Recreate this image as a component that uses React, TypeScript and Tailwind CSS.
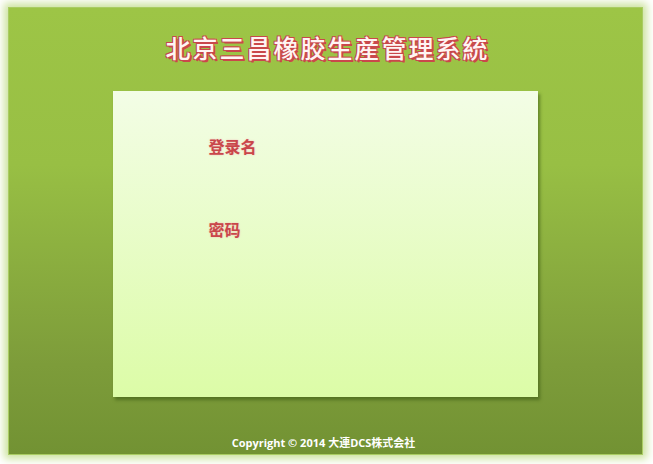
import React from 'react';

const cjk = '"Noto Sans CJK SC", "Noto Sans CJK JP", sans-serif';

const App: React.FC = () => {
  return (
    <div className="w-[653px] h-[464px] bg-white p-[7px_10px_9px_8px]">
      <div
        className="w-full h-full flex flex-col items-center border border-[#a9cc62] bg-[linear-gradient(to_bottom,#9dc546_0%,#98bf44_35%,#7d9c3a_80%,#729233_100%)] shadow-[0_0_8px_4px_#cde3a0]"
        style={{ fontFamily: cjk }}
      >
        {/* Title */}
        <h1 className="mt-[21px] ml-[4px] text-[25px] leading-[37px] font-medium tracking-[2px] text-[#fff5f3] [text-shadow:-1px_-1px_0_#c9484b,1px_-1px_0_#c9484b,-1px_1px_0_#c9484b,1px_1px_0_#c9484b,2px_2px_0_#c9484b]">
          北京三昌橡胶生産管理系統
        </h1>

        {/* Login card */}
        <div className="mt-[25px] ml-[-1px] w-[425px] h-[306px] bg-[linear-gradient(to_bottom,#f3fde6,#dcfca7)] shadow-[2px_3px_3px_rgba(60,90,20,0.6)] pl-[96px] pt-[44px] flex flex-col">
          <label className="text-[16px] leading-[22px] font-bold text-[#c9474a] [text-shadow:0_0_2px_#f2b9b9]">
            登录名
          </label>
          <label className="mt-[61px] text-[16px] leading-[22px] font-bold text-[#c9474a] [text-shadow:0_0_2px_#f2b9b9]">
            密码
          </label>
        </div>

        {/* Footer */}
        <div
          className="mt-auto mb-[3px] ml-[-4px] text-[11px] leading-[16px] font-bold text-white"
          style={{ fontFamily: '"Open Sans", "Noto Sans CJK SC", sans-serif' }}
        >
          Copyright © 2014 大連DCS株式会社
        </div>
      </div>
    </div>
  );
};

export default App;
